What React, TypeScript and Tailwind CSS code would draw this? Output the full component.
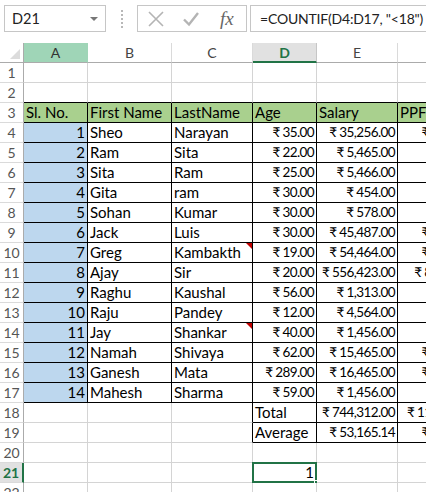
import React from 'react';

const COLS = ['A', 'B', 'C', 'D', 'E', 'F'];
const W = ['w-[64px]', 'w-[84px]', 'w-[81px]', 'w-[64px]', 'w-[81px]', 'w-[85px]'];

type Row = [string, string, string, string, string, string];

// rows 3..19 of the sheet
const data: Record<number, Row> = {
  3: ['Sl. No.', 'First Name', 'LastName', 'Age', 'Salary', 'PPF'],
  4: ['1', 'Sheo', 'Narayan', '₹ 35.00', '₹ 35,256.00', '₹ 5,288.40'],
  5: ['2', 'Ram', 'Sita', '₹ 22.00', '₹ 5,465.00', '₹ 819.75'],
  6: ['3', 'Sita', 'Ram', '₹ 25.00', '₹ 5,466.00', '₹ 819.90'],
  7: ['4', 'Gita', 'ram', '₹ 30.00', '₹ 454.00', '₹ 68.10'],
  8: ['5', 'Sohan', 'Kumar', '₹ 30.00', '₹ 578.00', '₹ 86.70'],
  9: ['6', 'Jack', 'Luis', '₹ 30.00', '₹ 45,487.00', '₹ 6,823.05'],
  10: ['7', 'Greg', 'Kambakth', '₹ 19.00', '₹ 54,464.00', '₹ 8,169.60'],
  11: ['8', 'Ajay', 'Sir', '₹ 20.00', '₹ 556,423.00', '₹ 83,463.45'],
  12: ['9', 'Raghu', 'Kaushal', '₹ 56.00', '₹ 1,313.00', '₹ 196.95'],
  13: ['10', 'Raju', 'Pandey', '₹ 12.00', '₹ 4,564.00', '₹ 684.60'],
  14: ['11', 'Jay', 'Shankar', '₹ 40.00', '₹ 1,456.00', '₹ 218.40'],
  15: ['12', 'Namah', 'Shivaya', '₹ 62.00', '₹ 15,465.00', '₹ 2,319.75'],
  16: ['13', 'Ganesh', 'Mata', '₹ 289.00', '₹ 16,465.00', '₹ 2,469.75'],
  17: ['14', 'Mahesh', 'Sharma', '₹ 59.00', '₹ 1,456.00', '₹ 218.40'],
  18: ['', '', '', 'Total', '₹ 744,312.00', '₹ 111,646.80'],
  19: ['', '', '', 'Average', '₹ 53,165.14', '₹ 7,974.77'],
};

const comments = ['10-2', '14-2'];

function bordered(r: number, c: number) {
  if (c > 5) return false;
  if (r >= 3 && r <= 17) return true;
  if ((r === 18 || r === 19) && c >= 3) return true;
  return false;
}

function Cell({ r, c }: { r: number; c: number }) {
  const text = data[r] ? data[r][c] : r === 21 && c === 3 ? '1' : '';
  const money = text.startsWith('₹');
  const num = money || (r >= 4 && r <= 17 && c === 0) || (r === 21 && c === 3);
  const blackR = bordered(r, c) || bordered(r, c + 1);
  const blackB = bordered(r, c) || bordered(r + 1, c);
  let bg = 'bg-white';
  if (r === 3) bg = 'bg-[#a9d08e]';
  else if (r >= 4 && r <= 17 && c === 0) bg = 'bg-[#bdd7ee]';
  return (
    <div
      className={`${W[c]} shrink-0 h-[20px] relative flex items-center border-r border-b whitespace-nowrap ${bg} ${
        blackR ? 'border-r-black' : 'border-r-[#d4d4d4]'
      } ${blackB ? 'border-b-black' : 'border-b-[#d4d4d4]'} ${num ? 'justify-end pr-[2px]' : 'justify-start pl-[2px]'}`}
    >
      {money ? (
        <span className="leading-none text-[13.5px] tracking-[-0.6px]">{text}</span>
      ) : (
        <span className="leading-none">{text}</span>
      )}
      {comments.includes(`${r}-${c}`) && (
        <span className="absolute right-0 top-0 w-0 h-0 border-t-[6px] border-t-[#c00000] border-l-[6px] border-l-transparent" />
      )}
      {r === 21 && c === 3 && (
        <>
          <span className="absolute left-[-1px] top-[-1px] right-[-1px] bottom-[-1px] border-2 border-[#217346]" />
          <span className="absolute right-[-4px] bottom-[-4px] w-[6px] h-[6px] bg-[#217346] border border-white" />
        </>
      )}
    </div>
  );
}

export default function App() {
  const rows = Array.from({ length: 22 }, (_, i) => i + 1);
  return (
    <div className="w-[426px] h-[492px] overflow-hidden bg-white text-[15px] text-black" style={{ fontFamily: 'Lato, "Noto Sans", sans-serif' }}>
      {/* formula bar */}
      <div className="h-[43px] flex items-start pt-[5px] pl-[4px]">
        <div className="w-[102px] h-[27px] border border-[#c6c6c6] flex items-center justify-between pl-[7px] pr-[7px] text-[#222] text-[14.5px]">
          <span>D21</span>
          <span className="w-0 h-0 border-t-[4px] border-t-[#777] border-x-[4px] border-x-transparent" />
        </div>
        <div className="w-[31px] h-[27px] flex flex-col items-center justify-center gap-[2px]">
          <span className="w-[2px] h-[2px] bg-[#b8b8b8]" />
          <span className="w-[2px] h-[2px] bg-[#b8b8b8]" />
          <span className="w-[2px] h-[2px] bg-[#b8b8b8]" />
          <span className="w-[2px] h-[2px] bg-[#b8b8b8]" />
          <span className="w-[2px] h-[2px] bg-[#b8b8b8]" />
        </div>
        <div className="w-[110px] h-[27px] border border-[#c6c6c6] flex items-center pl-[8px]">
          <svg width="18" height="18" viewBox="0 0 18 18" className="ml-[1px]">
            <path d="M2 2 L16 16 M16 2 L2 16" stroke="#b4b4b4" strokeWidth="1.6" fill="none" />
          </svg>
          <svg width="18" height="18" viewBox="0 0 18 18" className="ml-[17px]">
            <path d="M2 9.5 L7 14.5 L16 3" stroke="#b4b4b4" strokeWidth="2.4" fill="none" />
          </svg>
          <span className="ml-[20px] italic text-[19px] text-[#666] leading-none" style={{ fontFamily: '"Liberation Serif", serif' }}>
            fx
          </span>
        </div>
        <div className="ml-[3px] flex-1 min-w-0 h-[27px] border border-r-0 border-[#c6c6c6] flex items-center pl-[9px] text-[#222] text-[14px] tracking-[-0.2px] whitespace-nowrap overflow-hidden">
          =COUNTIF(D4:D17, "&lt;18")
        </div>
      </div>

      {/* column headers */}
      <div className="flex h-[20px]">
        <div className="w-[24px] shrink-0 h-[20px] border-r border-b border-[#ababab] relative">
          <span className="absolute right-[3px] bottom-[3px] w-0 h-0 border-b-[10px] border-b-[#dcdcdc] border-l-[10px] border-l-transparent" />
        </div>
        {COLS.map((col, c) => (
          <div
            key={col}
            className={`${W[c]} shrink-0 h-[20px] flex items-center justify-center text-[14px] border-r ${
              c === 0
                ? 'bg-[#9fd5b7] text-[#333] border-b border-b-[#ababab] border-r-[#9fd5b7]'
                : c === 3
                ? 'bg-[#e1e1e1] text-[#217346] font-bold border-b-2 border-b-[#217346] border-r-[#c6c6c6]'
                : 'bg-white text-[#444] border-b border-b-[#ababab] border-r-[#dadada]'
            }`}
          >
            {col}
          </div>
        ))}
      </div>

      {/* rows */}
      {rows.map((r) => (
        <div key={r} className="flex h-[20px]">
          <div
            className={`w-[24px] shrink-0 h-[20px] flex items-center justify-center text-[14px] border-b border-b-[#dadada] ${
              r === 21
                ? 'bg-[#e1e1e1] text-[#217346] font-bold border-r-2 border-r-[#217346]'
                : 'bg-white text-[#555] border-r border-r-[#ababab]'
            }`}
          >
            {r}
          </div>
          {COLS.map((col, c) => (
            <Cell key={col} r={r} c={c} />
          ))}
        </div>
      ))}
    </div>
  );
}
